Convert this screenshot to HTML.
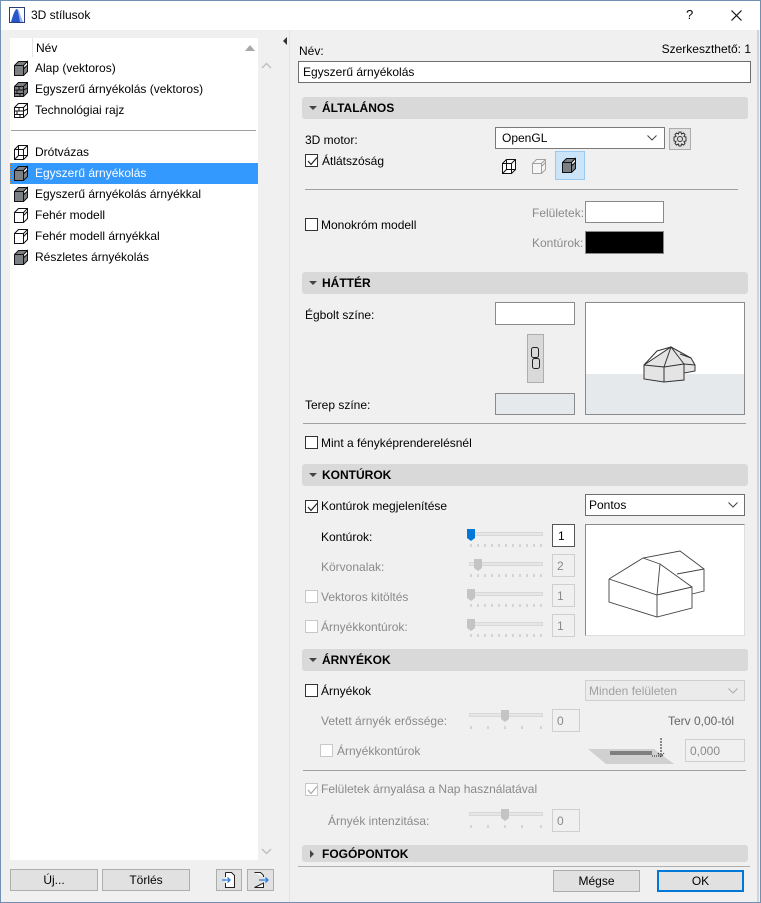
<!DOCTYPE html>
<html><head><meta charset="utf-8"><style>
*{box-sizing:border-box;margin:0;padding:0}
body{width:761px;height:903px;overflow:hidden;background:#f0f0f0;font-family:"Liberation Sans",sans-serif;font-size:12px;color:#000;position:relative}
.a{position:absolute}
.t{position:absolute;white-space:nowrap;line-height:14px}
.g{color:#8a8a8a}
.cb{position:absolute;width:13px;height:13px;border:1px solid #333;background:#fff}
.cb.d{border-color:#c8c8c8}
.cb svg{position:absolute;left:0;top:0}
.in{position:absolute;background:#fff;border:1px solid #7a7a7a}
.in.d{background:#f0f0f0;border-color:#cfcfcf;color:#8a8a8a}
.sec{position:absolute;left:302px;width:446px;height:22px;background:#d9d9d9;border-radius:3px;font-weight:bold;font-size:12px}
.sec span{position:absolute;left:20px;top:4px}
.sec i{position:absolute;left:7px;top:9px;border-left:4px solid transparent;border-right:4px solid transparent;border-top:4px solid #444}
.hr{position:absolute;height:1px;background:#a0a0a0}
.btn{position:absolute;height:22px;background:#e1e1e1;border:1px solid #adadad;text-align:center;line-height:20px}
.row{position:absolute;left:10px;width:248px;height:21px}
.row span{position:absolute;left:25px;top:3px}
.row svg{position:absolute;left:3px;top:2px}
</style></head><body>
<svg width="0" height="0" style="position:absolute"><defs>
<g id="cube"><path d="M1.5 5.5 L5.5 1.5 H14.5 V11.5 L10.5 15.5 H1.5 Z" fill="#7d8083" stroke="#111"/><path d="M1.5 5.5 H10.5 V15.5 M10.5 5.5 L14.5 1.5" fill="none" stroke="#111"/><path d="M10.5 5.5 L14.5 1.5 V5 L11 8.5 Z" fill="#fff" stroke="#111"/></g>
<g id="cubew"><path d="M1.5 5.5 L5.5 1.5 H14.5 V11.5 L10.5 15.5 H1.5 Z" fill="#fff" stroke="#111"/><path d="M1.5 5.5 H10.5 V15.5 M10.5 5.5 L14.5 1.5 M10.5 8.5 L14.5 4.5" fill="none" stroke="#111"/></g>
<g id="cubewire"><path d="M1.5 5.5 L5.5 1.5 H14.5 V11.5 L10.5 15.5 H1.5 Z" fill="#fff" stroke="#111"/><path d="M1.5 5.5 H10.5 V15.5 M10.5 5.5 L14.5 1.5 M5.5 1.5 V11.5 H14.5 M5.5 11.5 L1.5 15.5" fill="none" stroke="#111"/></g>
<g id="cubeb"><path d="M1.5 5.5 L5.5 1.5 H14.5 V11.5 L10.5 15.5 H1.5 Z" fill="#7d8083" stroke="#111"/><path d="M1.5 5.5 H10.5 V15.5 M10.5 5.5 L14.5 1.5 M1.5 9 H10.5 M1.5 12.5 H10.5 M6 5.5 V9 M4 9 V12.5 M7 12.5 V15.5 M10.5 9 L14.5 7" fill="none" stroke="#111"/></g>
<g id="cubebw"><path d="M1.5 5.5 L5.5 1.5 H14.5 V11.5 L10.5 15.5 H1.5 Z" fill="#fff" stroke="#111"/><path d="M1.5 5.5 H10.5 V15.5 M10.5 5.5 L14.5 1.5 M1.5 9 H10.5 M1.5 12.5 H10.5 M6 5.5 V9 M4 9 V12.5 M7 12.5 V15.5 M10.5 9 L14.5 7" fill="none" stroke="#111"/></g>
<g id="chk"><path d="M2 6 L5 9.5 L11 2.5" fill="none" stroke="#222" stroke-width="1.2"/></g>
</defs></svg>

<div class="a" style="left:0;top:0;width:761px;height:903px;border:1px solid #6f8fb4"></div>
<div class="a" style="left:1px;top:1px;width:759px;height:29px;background:#fff"></div>
<svg class="a" style="left:9px;top:7px" width="16" height="16"><rect x="0.5" y="0.5" width="15" height="15" fill="#fff" stroke="#2a3f7a"/><path d="M2 15 C4 8 6 2 8 2 C10 2 11 9 14 15 Z" fill="#2756c8"/><path d="M8 2 C10 2 11 9 14 15 H11 C10 9 9 4 8 2Z" fill="#9ab6ee"/></svg>
<div class="t" style="left:31px;top:8px;font-size:12px">3D stílusok</div>
<div class="t" style="left:686px;top:8px;font-size:13px">?</div>
<svg class="a" style="left:731px;top:10px" width="11" height="11"><path d="M0.5 0.5 L10.5 10.5 M10.5 0.5 L0.5 10.5" stroke="#111" stroke-width="1.2"/></svg>

<div class="a" style="left:10px;top:38px;width:248px;height:822px;background:#fff"></div>
<div class="a" style="left:32px;top:38px;width:1px;height:19px;background:#e5e5e5"></div>
<div class="t" style="left:36px;top:41px">Név</div>
<div class="a" style="left:245px;top:45px;border-left:5px solid transparent;border-right:5px solid transparent;border-bottom:6px solid #a8a8a8"></div>
<svg class="a" style="left:261px;top:62px" width="11" height="7"><path d="M1 6 L5.5 1.5 L10 6" fill="none" stroke="#c0c0c0" stroke-width="1.5"/></svg>
<svg class="a" style="left:261px;top:848px" width="11" height="7"><path d="M1 1 L5.5 5.5 L10 1" fill="none" stroke="#c0c0c0" stroke-width="1.5"/></svg>

<div class="row" style="top:58px"><svg width="17" height="17"><use href="#cube"/></svg><span>Alap (vektoros)</span></div>
<div class="row" style="top:79px"><svg width="17" height="17"><use href="#cubeb"/></svg><span>Egyszerű árnyékolás (vektoros)</span></div>
<div class="row" style="top:100px"><svg width="17" height="17"><use href="#cubebw"/></svg><span>Technológiai rajz</span></div>
<div class="a" style="left:11px;top:130px;width:245px;height:1px;background:#a0a0a0"></div>
<div class="row" style="top:142px"><svg width="17" height="17"><use href="#cubewire"/></svg><span>Drótvázas</span></div>
<div class="row" style="top:163px;background:#3399ff;color:#fff;border:1px dotted #c87a33"><svg width="17" height="17" style="left:2px;top:1px"><use href="#cube"/></svg><span style="left:24px;top:2px">Egyszerű árnyékolás</span></div>
<div class="row" style="top:184px"><svg width="17" height="17"><use href="#cube"/></svg><span>Egyszerű árnyékolás árnyékkal</span></div>
<div class="row" style="top:205px"><svg width="17" height="17"><use href="#cubew"/></svg><span>Fehér modell</span></div>
<div class="row" style="top:226px"><svg width="17" height="17"><use href="#cubew"/></svg><span>Fehér modell árnyékkal</span></div>
<div class="row" style="top:247px"><svg width="17" height="17"><use href="#cube"/></svg><span>Részletes árnyékolás</span></div>

<div class="btn" style="left:10px;top:869px;width:88px">Új...</div>
<div class="btn" style="left:102px;top:869px;width:88px">Törlés</div>
<div class="btn" style="left:216px;top:869px;width:26px"><svg width="14" height="16" style="margin-top:2px"><path d="M3.5 0.5 H9.5 L12.5 3.5 V15.5 H3.5 V11 M3.5 5 V0.5" fill="#fff" stroke="#222"/><path d="M0 8 H8 M5.5 5.5 L8 8 L5.5 10.5" fill="none" stroke="#2a7ae2" stroke-width="1.3"/></svg></div>
<div class="btn" style="left:247px;top:869px;width:27px"><svg width="16" height="16" style="margin-top:2px"><path d="M1.5 0.5 H7.5 L10.5 3.5 V5 M10.5 11 V15.5 H1.5 Z" fill="#fff" stroke="#222"/><path d="M6 8 H15 M12.5 5.5 L15 8 L12.5 10.5" fill="none" stroke="#2a7ae2" stroke-width="1.3"/></svg></div>

<div class="a" style="left:289px;top:30px;width:1px;height:872px;background:#e3e3e3"></div>
<div class="a" style="left:283px;top:37px;border-top:4px solid transparent;border-bottom:4px solid transparent;border-right:4px solid #333"></div>
<div class="a" style="left:757px;top:30px;width:2px;height:872px;background:#d4d4d4"></div>

<div class="t" style="left:299px;top:44px">Név:</div>
<div class="t" style="right:10px;top:42px">Szerkeszthető: 1</div>
<div class="in" style="left:298px;top:61px;width:453px;height:22px;border-color:#6e6e6e"><span class="t" style="left:4px;top:3px">Egyszerű árnyékolás</span></div>

<div class="sec" style="top:97px"><i></i><span>ÁLTALÁNOS</span></div>
<div class="t" style="left:305px;top:133px">3D motor:</div>
<div class="in" style="left:495px;top:127px;width:170px;height:22px"><span class="t" style="left:6px;top:3px">OpenGL</span><svg class="a" style="left:151px;top:7px" width="10" height="6"><path d="M0.5 0.5 L5 5 L9.5 0.5" fill="none" stroke="#444"/></svg></div>
<div class="a" style="left:669px;top:128px;width:22px;height:22px;background:#e1e1e1;border:1px solid #adadad"></div>
<svg class="a" style="left:671px;top:130px" width="18" height="18"><circle cx="9" cy="9" r="2.5" fill="none" stroke="#333"/><path d="M8 2 H10 L10.5 4 L12.5 3 L14 4.5 L13 6.5 L15 7 V9 V11 L13 11.5 L14 13.5 L12.5 15 L10.5 14 L10 16 H8 L7.5 14 L5.5 15 L4 13.5 L5 11.5 L3 11 V7 L5 6.5 L4 4.5 L5.5 3 L7.5 4 Z" fill="none" stroke="#333"/></svg>
<div class="cb" style="left:305px;top:154px"><svg width="13" height="13"><use href="#chk"/></svg></div>
<div class="t" style="left:322px;top:154px">Átlátszóság</div>
<svg class="a" style="left:501px;top:158px" width="17" height="17"><use href="#cubewire"/></svg>
<svg class="a" style="left:531px;top:158px;opacity:.35" width="17" height="17"><use href="#cubew"/></svg>
<div class="a" style="left:555px;top:151px;width:30px;height:29px;background:#cce4f7;border:1px solid #99c9ef"></div>
<svg class="a" style="left:561px;top:157px" width="17" height="17"><use href="#cube"/></svg>
<div class="hr" style="left:305px;top:189px;width:433px"></div>
<div class="cb" style="left:305px;top:218px"></div>
<div class="t" style="left:321px;top:218px">Monokróm modell</div>
<div class="t g" style="left:532px;top:206px">Felületek:</div>
<div class="in" style="left:585px;top:201px;width:79px;height:22px;border-color:#8a8a8a"></div>
<div class="t g" style="left:532px;top:236px">Kontúrok:</div>
<div class="a" style="left:585px;top:231px;width:79px;height:23px;background:#000;border:1px solid #8a8a8a"></div>

<div class="sec" style="top:272px"><i></i><span>HÁTTÉR</span></div>
<div class="t" style="left:305px;top:308px">Égbolt színe:</div>
<div class="in" style="left:495px;top:302px;width:80px;height:23px;border-color:#8a8a8a"></div>
<div class="a" style="left:527px;top:334px;width:17px;height:49px;background:#d9d9d9;border:1px solid #adadad"></div>
<svg class="a" style="left:530px;top:346px" width="11" height="25"><rect x="1.5" y="1.5" width="7" height="10" rx="2" fill="none" stroke="#222"/><rect x="2.5" y="12.5" width="7" height="10" rx="2" fill="none" stroke="#222"/></svg>
<div class="t" style="left:305px;top:398px">Terep színe:</div>
<div class="in" style="left:495px;top:393px;width:80px;height:22px;background:#e6e9ec;border-color:#8a8a8a"></div>
<div class="a" style="left:585px;top:302px;width:160px;height:113px;background:#fff;border:1px solid #8a8a8a;overflow:hidden"><div class="a" style="left:0;top:71px;width:160px;height:42px;background:#e6e9ec"></div>
<svg class="a" style="left:50px;top:40px" width="70" height="45"><path d="M35 4 L55 15 L59 22 V28 L48 30 V37 L28 39 L8 36 V22 Z" fill="#e4e4e4" stroke="#333"/><path d="M8 22 L28 24 V39 M28 24 L48 21 V30 M28 24 L35 4 L48 21 M35 4 L21 8 L8 22 M48 21 L59 22 M44 11 L55 15" fill="none" stroke="#333"/></svg></div>
<div class="hr" style="left:303px;top:423px;width:443px"></div>
<div class="cb" style="left:305px;top:436px"></div>
<div class="t" style="left:321px;top:436px">Mint a fényképrenderelésnél</div>

<div class="sec" style="top:464px"><i></i><span>KONTÚROK</span></div>
<div class="cb" style="left:305px;top:500px"><svg width="13" height="13"><use href="#chk"/></svg></div>
<div class="t" style="left:321px;top:499px">Kontúrok megjelenítése</div>
<div class="in" style="left:585px;top:494px;width:160px;height:22px;border-color:#6e6e6e"><span class="t" style="left:3px;top:3px">Pontos</span><svg class="a" style="left:142px;top:7px" width="10" height="6"><path d="M0.5 0.5 L5 5 L9.5 0.5" fill="none" stroke="#444"/></svg></div>

<div class="t" style="left:321px;top:530px">Kontúrok:</div>
<div class="t g" style="left:321px;top:560px">Körvonalak:</div>
<div class="cb d" style="left:305px;top:590px"></div><div class="t g" style="left:321px;top:590px">Vektoros kitöltés</div>
<div class="cb d" style="left:305px;top:620px"></div><div class="t g" style="left:321px;top:620px">Árnyékkontúrok:</div>

<svg class="a" style="left:466px;top:525px" width="80" height="115">
<g fill="none" stroke="#d8d8d8"><rect x="3.5" y="7.5" width="73" height="3" fill="#e6e6e6"/><rect x="3.5" y="37.5" width="73" height="3" fill="#e6e6e6"/><rect x="3.5" y="67.5" width="73" height="3" fill="#e6e6e6"/><rect x="3.5" y="97.5" width="73" height="3" fill="#e6e6e6"/></g>
<path d="M1 4 H9 V13 L5 16 L1 13Z" fill="#0078d7"/>
<path d="M8 34 H16 V43 L12 46 L8 43Z" fill="#c4c4c4"/>
<path d="M1 64 H9 V73 L5 76 L1 73Z" fill="#c4c4c4"/>
<path d="M1 94 H9 V103 L5 106 L1 103Z" fill="#c4c4c4"/>
<g stroke="#b8b8b8"><path d="M5 19v3M12 19v3M19 19v3M26 19v3M33 19v3M40 19v3M47 19v3M54 19v3M61 19v3M68 19v3M75 19v3M5 49v3M12 49v3M19 49v3M26 49v3M33 49v3M40 49v3M47 49v3M54 49v3M61 49v3M68 49v3M75 49v3M5 79v3M12 79v3M19 79v3M26 79v3M33 79v3M40 79v3M47 79v3M54 79v3M61 79v3M68 79v3M75 79v3M5 109v3M12 109v3M19 109v3M26 109v3M33 109v3M40 109v3M47 109v3M54 109v3M61 109v3M68 109v3M75 109v3"/></g>
</svg>
<div class="in" style="left:552px;top:524px;width:23px;height:23px;border-color:#555"><span class="t" style="left:5px;top:4px">1</span></div>
<div class="in d" style="left:552px;top:554px;width:23px;height:23px"><span class="t" style="left:4px;top:4px">2</span></div>
<div class="in d" style="left:552px;top:584px;width:23px;height:23px"><span class="t" style="left:4px;top:4px">1</span></div>
<div class="in d" style="left:552px;top:614px;width:23px;height:23px"><span class="t" style="left:4px;top:4px">1</span></div>
<div class="a" style="left:585px;top:524px;width:160px;height:112px;background:#fff;border:1px solid #8a8a8a;border-right-color:#ddd;border-bottom-color:#ddd"></div>
<svg class="a" style="left:585px;top:524px" width="160" height="112"><path d="M24 55 L58 34 L95 27 L119 45 V67 L107 70 M24 55 V78 L72 93 L107 84 V63 L72 71 L24 55 M72 71 V93 M58 34 L75 40 L72 71 M75 40 L107 63 M92 50 L119 45" fill="none" stroke="#444" stroke-width="0.9"/></svg>

<div class="sec" style="top:649px"><i></i><span>ÁRNYÉKOK</span></div>
<div class="cb" style="left:305px;top:684px"></div>
<div class="t" style="left:321px;top:684px">Árnyékok</div>
<div class="in d" style="left:585px;top:680px;width:160px;height:21px;background:#ebebeb"><span class="t" style="left:3px;top:3px;color:#a0a0a0">Minden felületen</span><svg class="a" style="left:142px;top:7px" width="10" height="6"><path d="M0.5 0.5 L5 5 L9.5 0.5" fill="none" stroke="#aaa"/></svg></div>
<div class="t g" style="left:321px;top:714px">Vetett árnyék erőssége:</div>
<svg class="a" style="left:466px;top:710px" width="80" height="22"><rect x="3.5" y="3.5" width="73" height="3" fill="#e6e6e6" stroke="#d8d8d8"/><path d="M35 0 H43 V9 L39 12 L35 9Z" fill="#c4c4c4"/><g stroke="#b8b8b8"><path d="M5 16v3M22 16v3M39 16v3M56 16v3M75 16v3"/></g></svg>
<div class="in d" style="left:552px;top:709px;width:28px;height:23px"><span class="t" style="left:4px;top:4px">0</span></div>
<div class="t g" style="left:668px;top:714px;color:#666">Terv 0,00-tól</div>
<div class="cb d" style="left:320px;top:744px"></div>
<div class="t g" style="left:337px;top:744px">Árnyékkontúrok</div>
<svg class="a" style="left:588px;top:737px" width="90" height="27"><path d="M0 12 H66 L86 27 H18 Z" fill="#d0d0d0"/><rect x="22" y="14" width="42" height="4" fill="#7f7f7f"/><path d="M73 1 V18 M70 16 L73 20 L76 16" fill="none" stroke="#222" stroke-dasharray="2 1"/><path d="M64 19 H72" stroke="#222" stroke-dasharray="1 1"/></svg>
<div class="in d" style="left:685px;top:739px;width:60px;height:23px"><span class="t" style="left:4px;top:4px">0,000</span></div>
<div class="hr" style="left:303px;top:770px;width:443px"></div>
<div class="cb d" style="left:305px;top:783px"><svg width="13" height="13" style="opacity:.4"><use href="#chk"/></svg></div>
<div class="t g" style="left:321px;top:782px">Felületek árnyalása a Nap használatával</div>
<div class="t g" style="left:328px;top:814px">Árnyék intenzitása:</div>
<svg class="a" style="left:466px;top:809px" width="80" height="22"><rect x="3.5" y="3.5" width="73" height="3" fill="#e6e6e6" stroke="#d8d8d8"/><path d="M35 0 H43 V9 L39 12 L35 9Z" fill="#c4c4c4"/><g stroke="#b8b8b8"><path d="M5 16v3M22 16v3M39 16v3M56 16v3M75 16v3"/></g></svg>
<div class="in d" style="left:552px;top:809px;width:28px;height:23px"><span class="t" style="left:4px;top:4px">0</span></div>

<div class="sec" style="top:845px;height:17px"><i style="left:8px;top:5px;border-top:4px solid transparent;border-bottom:4px solid transparent;border-left:4px solid #444;border-right:0"></i><span style="top:2px">FOGÓPONTOK</span></div>
<div class="hr" style="left:298px;top:866px;width:452px;background:#b0b0b0"></div>
<div class="btn" style="left:553px;top:870px;width:87px">Mégse</div>
<div class="btn" style="left:657px;top:870px;width:87px;border:2px solid #0078d7;line-height:18px">OK</div>
</body></html>
